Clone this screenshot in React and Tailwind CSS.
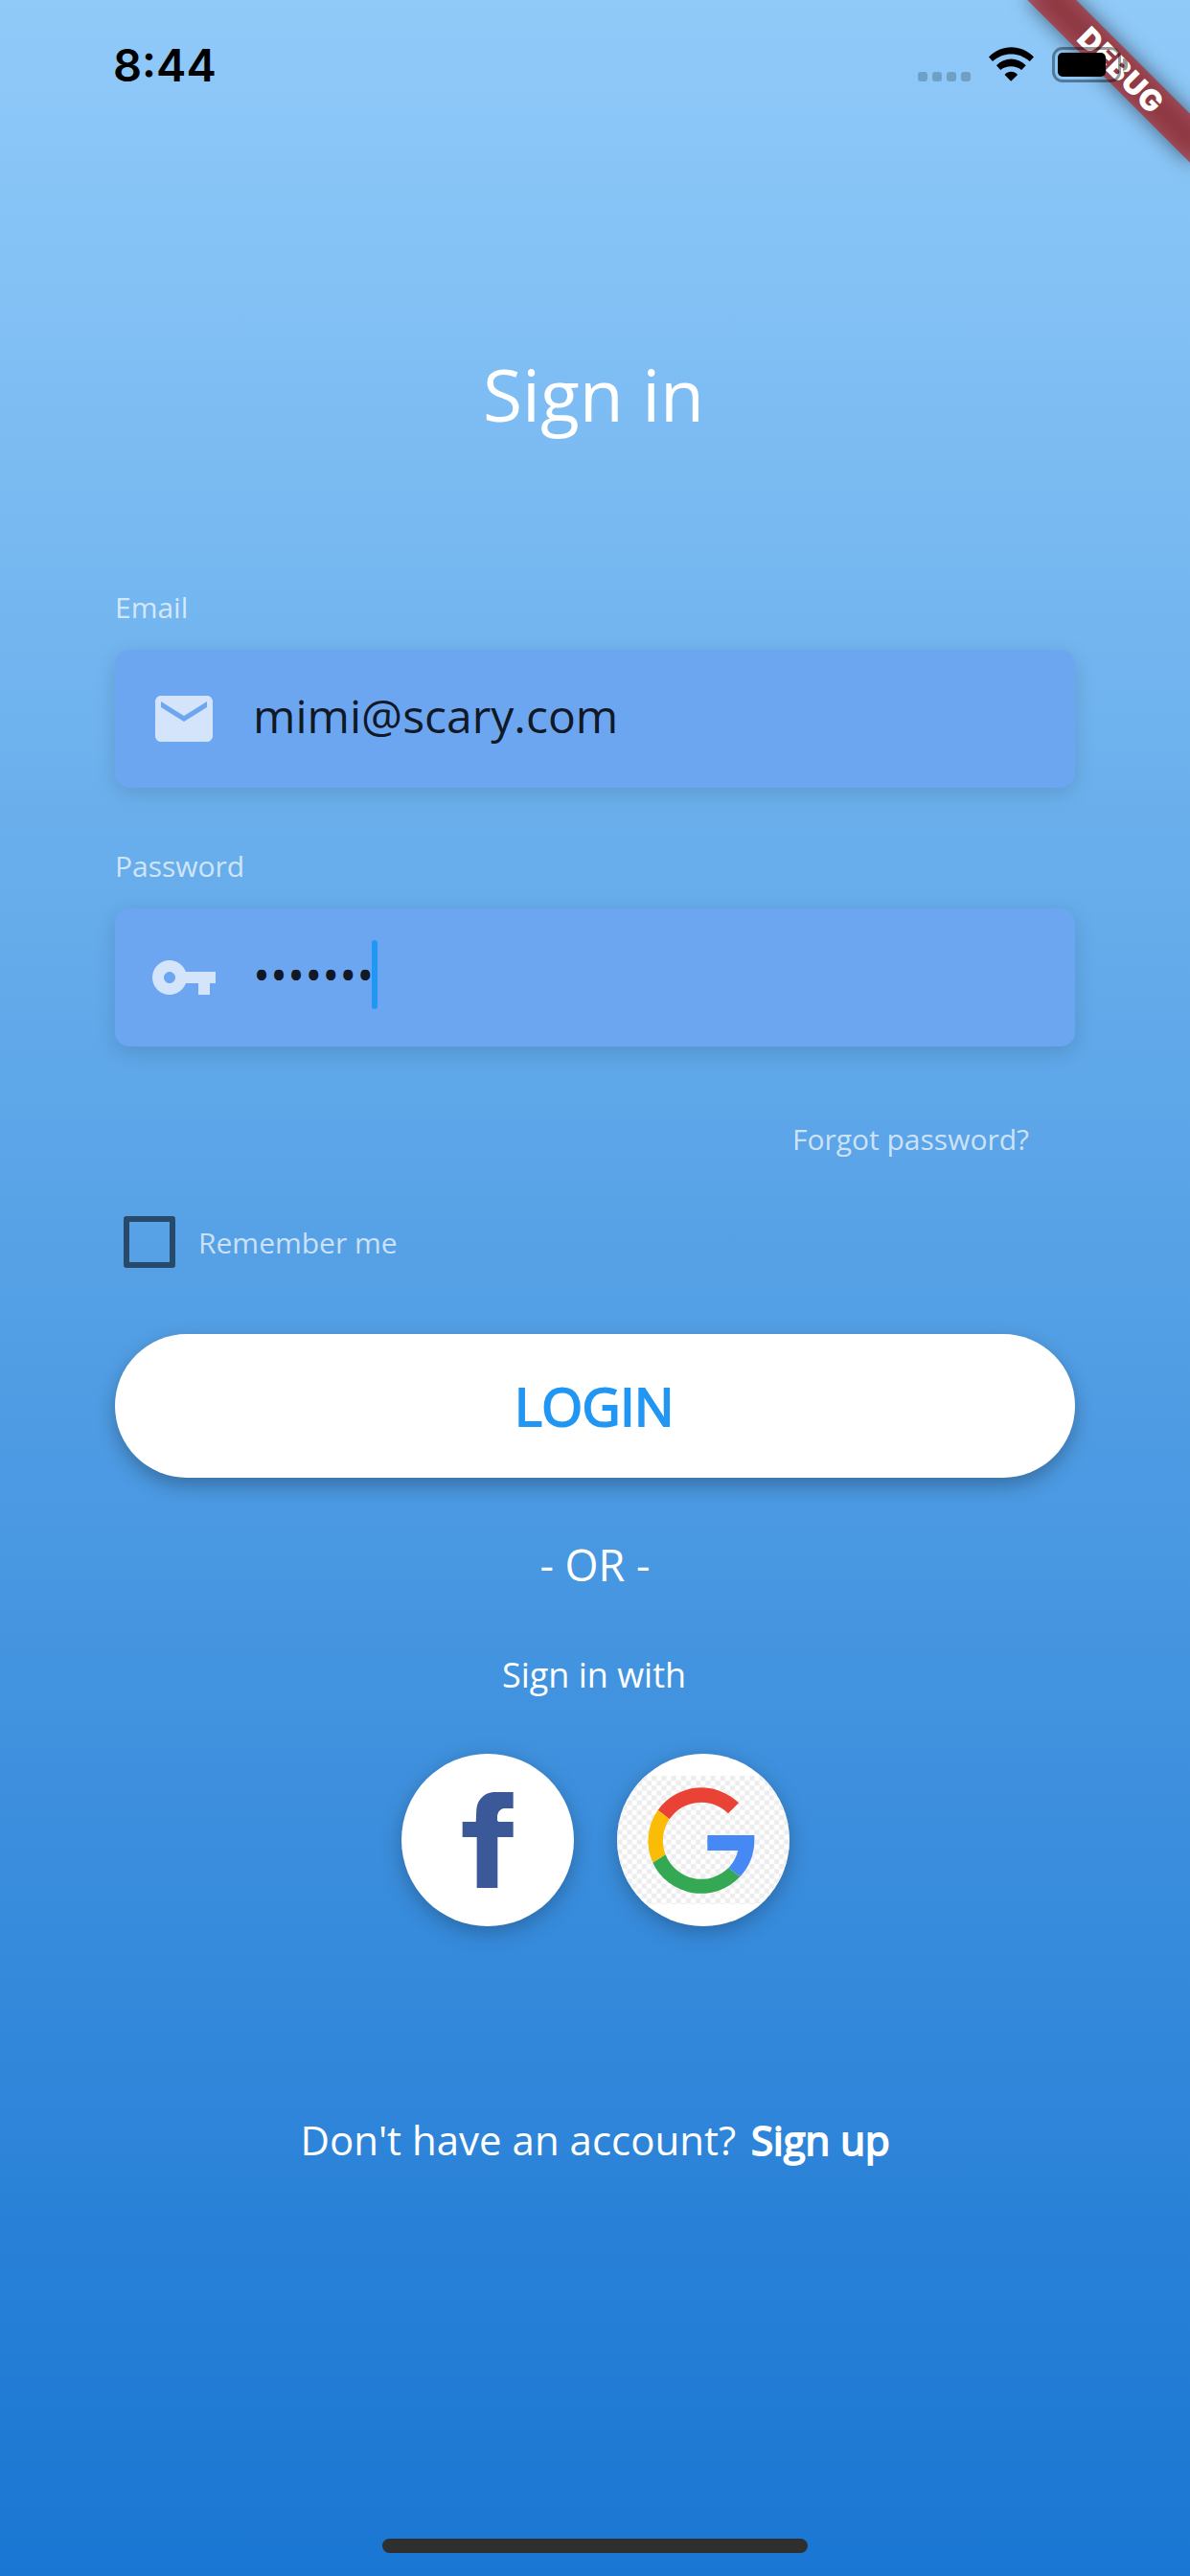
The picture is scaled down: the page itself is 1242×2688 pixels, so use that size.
const MailIcon = () => (
  <svg viewBox="0 0 24 24" className="size-[72px] fill-white/70">
    <path d="M20 4H4c-1.1 0-1.99.9-1.99 2L2 18c0 1.1.9 2 2 2h16c1.1 0 2-.9 2-2V6c0-1.1-.9-2-2-2zm0 4l-8 5-8-5V6l8 5 8-5v2z" />
  </svg>
);

const KeyIcon = () => (
  <svg viewBox="0 0 24 24" className="size-[72px] fill-white/70">
    <path d="M12.65 10C11.83 7.67 9.61 6 7 6c-3.31 0-6 2.69-6 6s2.69 6 6 6c2.61 0 4.83-1.67 5.65-4H17v4h4v-4h2v-4H12.65zM7 14c-1.1 0-2-.9-2-2s.9-2 2-2 2 .9 2 2-.9 2-2 2z" />
  </svg>
);

const FacebookLogo = () => (
  <svg viewBox="55 90 540 540" className="size-full">
    <path
      fill="#3b5998"
      d="M291 510V351H246V303H288C290 288 288 262 293 248C302 226 320 212 342 210H405V261H375C362 264 355 275 355 290V299L360 303H405V351H356V510Z"
    />
  </svg>
);

const GoogleLogo = () => (
  <svg viewBox="731 90 540 540" className="size-full">
    <defs>
      <pattern id="checker" x="839.3" y="159" width="30.7" height="30.7" patternUnits="userSpaceOnUse">
        <rect width="15.35" height="15.35" fill="#ededed" />
        <rect x="15.35" y="15.35" width="15.35" height="15.35" fill="#ededed" />
      </pattern>
    </defs>
    <rect x="731" y="159" width="540" height="402" fill="url(#checker)" />
    <path fill="#ea4335" d="M859 266A167 167 0 0 1 1112 244L1079 277A120 120 0 0 0 895 295Z" />
    <path fill="#fbbc05" d="M859 266A167 167 0 0 0 843 431L883 406A120 120 0 0 1 895 295Z" />
    <path fill="#34a853" d="M843 431A167 167 0 0 0 1116 475L1080 447A120 120 0 0 1 883 406Z" />
    <path fill="#4688f4" d="M1014 345H1161V363A167 167 0 0 1 1116 475L1080 447A120 120 0 0 0 1110 393H1014Z" />
  </svg>
);

const StatusBar = () => (
  <header className="relative z-20 flex h-[110px] shrink-0 items-start justify-between pr-[65px] pl-[118px]">
    <div className="mt-[39px] font-['Inter',sans-serif] text-[47px] leading-[58px] font-semibold text-black">8:44</div>
    <div className="mt-[49px] flex h-[37px]">
      <div className="mt-[26px] mr-[19px] flex gap-[5px]">
        <i className="size-[10px] rounded-[3px] bg-black/20" />
        <i className="size-[10px] rounded-[3px] bg-black/20" />
        <i className="size-[10px] rounded-[3px] bg-black/20" />
        <i className="size-[10px] rounded-[3px] bg-black/20" />
      </div>
      <svg viewBox="396 148 142 108" className="mr-[19px] h-[36px] w-[47px]">
        <path d="M396 179C436 138 498 138 538 179L525 193C490 163 443 163 408 193Z" />
        <path d="M420 206C447 179 486 179 513 206L499 220C480 205 452 205 433 220Z" />
        <path d="M446 235C458 222 475 222 487 235L466 256Z" />
      </svg>
      <div className="flex h-[37px] w-[72px] rounded-[11px] border-[3px] border-black/40 p-[3px]">
        <div className="h-[25px] w-[50px] rounded-[5px] bg-black" />
      </div>
      <div className="mt-[12px] ml-[2px] h-[13px] w-[5px] rounded-r-full bg-black/40" />
    </div>
  </header>
);

const DebugBanner = () => (
  <div className="absolute top-0 right-0 z-10 size-0 origin-top-left rotate-45">
    <div className="absolute top-[84px] left-[-120px] h-[36px] w-[240px] bg-black/50 blur-[10.9px]" />
    <div className="absolute top-[84px] left-[-120px] flex h-[36px] w-[240px] items-center justify-center bg-[#b71c1c]/63 pl-[2px] font-['Inter',sans-serif] text-[31px] leading-none font-black tracking-[0.8px] text-white">
      DEBUG
    </div>
  </div>
);

const Field = ({ label, icon, className, children }) => (
  <div className={className}>
    <div className="h-[41px] text-[30px] leading-[41px] text-white/70">{label}</div>
    <div className="mt-6 flex h-36 items-start rounded-[15px] bg-[#6ca6f0] shadow-[0_6px_22px_rgba(0,0,0,0.13)]">
      <div className="flex h-36 w-36 items-center justify-center">{icon}</div>
      <div className="flex pt-[36px] text-[48px] leading-[66px] text-black/87">{children}</div>
    </div>
  </div>
);

const SocialButton = ({ children }) => (
  <button className="size-[180px] overflow-hidden rounded-full bg-white shadow-[0_6px_22px_rgba(0,0,0,0.26)]">
    {children}
  </button>
);

export default function App() {
  return (
    <div className="relative flex h-[2688px] w-[1242px] flex-col overflow-hidden bg-linear-to-b/srgb from-[#90caf9] to-[#1976d2] font-['Open_Sans',sans-serif]">
      <DebugBanner />
      <StatusBar />
      <main className="flex flex-col px-[120px] pt-[249px]">
        <h1 className="h-[104px] pr-[3px] text-center text-[75px] leading-[104px] text-white">Sign in</h1>

        <Field label="Email" icon={<MailIcon />} className="mt-[150px]">
          mimi@scary.com
        </Field>
        <Field label="Password" icon={<KeyIcon />} className="mt-[61px]">
          •••••••
          <span className="mt-[-3px] ml-[-2px] h-[72px] w-[6px] rounded-[3px] bg-[#2196f3]" />
        </Field>

        <div className="mt-[76px] h-[41px] pr-12 text-right text-[30px] leading-[41px] text-white/70">
          Forgot password?
        </div>

        <div className="mt-[60px] flex h-[54px] items-center pl-[9px]">
          <span className="size-[54px] rounded-[3px] border-[6px] border-black/54" />
          <span className="ml-6 text-[30px] leading-[41px] text-white/70">Remember me</span>
        </div>

        <button className="mt-[69px] h-[150px] rounded-full bg-white pr-[2px] text-[55px] leading-[78px] tracking-[-0.4px] text-[#2196f3] shadow-[0_8px_20px_rgba(0,0,0,0.28)] [-webkit-text-stroke:2px_#2196f3]">
          LOGIN
        </button>

        <div className="mt-[60px] h-[62px] text-center text-[45px] leading-[62px] text-white">- OR -</div>
        <div className="mt-[59px] h-[49px] pr-[2px] text-center text-[36px] leading-[49px] text-white">Sign in with</div>

        <div className="mt-[58px] flex justify-center gap-[45px]">
          <SocialButton>
            <FacebookLogo />
          </SocialButton>
          <SocialButton>
            <GoogleLogo />
          </SocialButton>
        </div>

        <div className="mt-[194px] flex h-[57px] justify-center gap-[16px] text-[42px] leading-[57px] text-white">
          <span>Don't have an account?</span>
          <span className="[-webkit-text-stroke:1.8px_white]">Sign up</span>
        </div>
      </main>
      <div className="mx-auto mt-auto mb-6 h-[15px] w-[444px] shrink-0 rounded-full bg-[#2f2f2f]" />
    </div>
  );
}
